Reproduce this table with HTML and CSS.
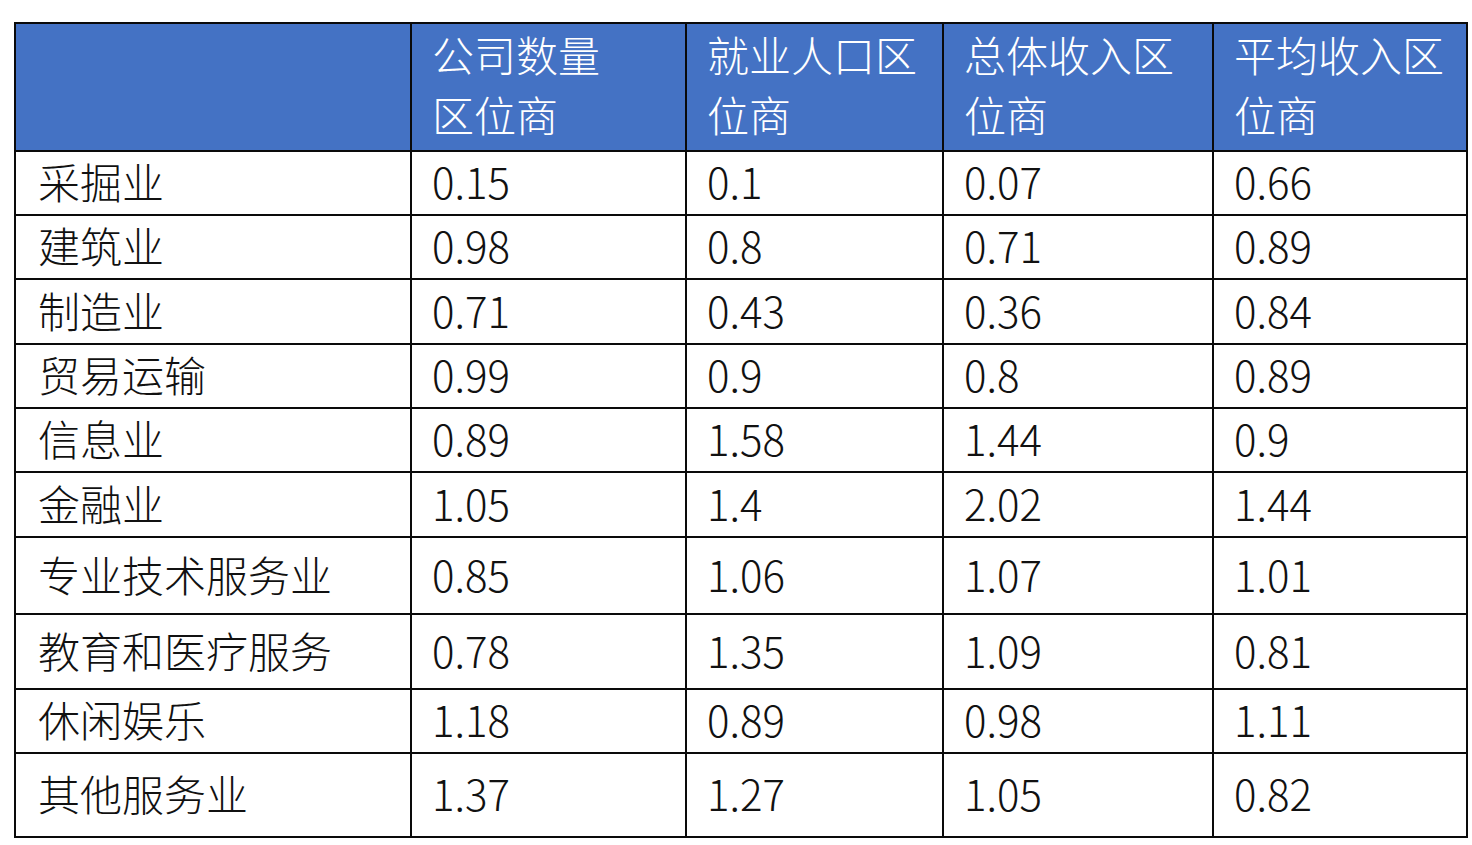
FILE: index.html
```html
<!DOCTYPE html>
<html lang="zh-CN">
<head>
<meta charset="utf-8">
<title>区位商</title>
<link rel="stylesheet" href="styles.css">
</head>
<body>
<table class="lq">
  <colgroup>
    <col class="c-name">
    <col class="c-a">
    <col class="c-b">
    <col class="c-c">
    <col class="c-d">
  </colgroup>
  <thead>
    <tr class="head">
      <th></th>
      <th>公司数量<br>区位商</th>
      <th>就业人口区<br>位商</th>
      <th>总体收入区<br>位商</th>
      <th>平均收入区<br>位商</th>
    </tr>
  </thead>
  <tbody>
    <tr class="r64"><td>采掘业</td><td>0.15</td><td>0.1</td><td>0.07</td><td>0.66</td></tr>
    <tr class="r64"><td>建筑业</td><td>0.98</td><td>0.8</td><td>0.71</td><td>0.89</td></tr>
    <tr class="r65"><td>制造业</td><td>0.71</td><td>0.43</td><td>0.36</td><td>0.84</td></tr>
    <tr class="r64"><td>贸易运输</td><td>0.99</td><td>0.9</td><td>0.8</td><td>0.89</td></tr>
    <tr class="r64"><td>信息业</td><td>0.89</td><td>1.58</td><td>1.44</td><td>0.9</td></tr>
    <tr class="r65"><td>金融业</td><td>1.05</td><td>1.4</td><td>2.02</td><td>1.44</td></tr>
    <tr class="r77"><td>专业技术服务业</td><td>0.85</td><td>1.06</td><td>1.07</td><td>1.01</td></tr>
    <tr class="r75"><td>教育和医疗服务</td><td>0.78</td><td>1.35</td><td>1.09</td><td>0.81</td></tr>
    <tr class="r64"><td>休闲娱乐</td><td>1.18</td><td>0.89</td><td>0.98</td><td>1.11</td></tr>
    <tr class="r84"><td>其他服务业</td><td>1.37</td><td>1.27</td><td>1.05</td><td>0.82</td></tr>
  </tbody>
</table>
</body>
</html>
```

FILE: styles.css
```css
html, body {
  margin: 0;
  padding: 0;
  background: #ffffff;
}

body {
  padding: 22px 0 0 14px;
  font-family: "Noto Sans CJK SC", "Noto Sans", sans-serif;
  font-weight: 300;
  color: #111111;
}

.lq {
  border-collapse: collapse;
  table-layout: fixed;
  width: 1452px;
}

.c-name { width: 396px; }
.c-a { width: 275px; }
.c-b { width: 257px; }
.c-c { width: 270px; }
.c-d { width: 254px; }

.lq th,
.lq td {
  border: 2px solid #0a0a0a;
  padding: 0 0 0 20px;
  text-align: left;
  vertical-align: middle;
  font-size: 42px;
  font-weight: 300;
  line-height: 60px;
  white-space: nowrap;
}

.lq td {
  line-height: 50px;
  padding-bottom: 4px;
  box-sizing: border-box;
}

.lq td:first-child,
.lq th:first-child {
  padding-left: 22px;
}

.head th {
  background: #4472c4;
  color: #ffffff;
  height: 125px;
  padding-bottom: 6px;
  box-sizing: border-box;
}

.r64 td { height: 64px; }
.r65 td { height: 65px; }
.r75 td { height: 75px; }
.r77 td { height: 77px; }
.r84 td { height: 84px; }
```
